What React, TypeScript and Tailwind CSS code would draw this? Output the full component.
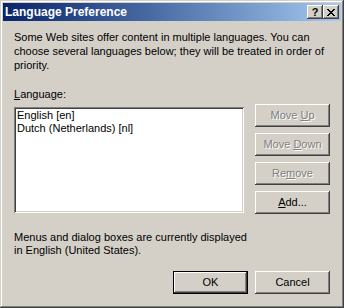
import React from 'react';

const font = { fontFamily: '"Liberation Sans", Arial, sans-serif' };

const raised =
  'shadow-[inset_-1px_-1px_#404040,inset_1px_1px_#ffffff,inset_-2px_-2px_#808080,inset_2px_2px_#d4d0c8]';

const Btn: React.FC<{ label: React.ReactNode; disabled?: boolean; isDefault?: boolean }> = ({
  label,
  disabled,
  isDefault,
}) => (
  <div
    className={
      'flex h-[23px] w-[75px] items-center justify-center bg-[#d4d0c8] text-[11px] ' +
      (isDefault
        ? 'shadow-[inset_-1px_-1px_#000000,inset_1px_1px_#000000,inset_-2px_-2px_#404040,inset_2px_2px_#ffffff,inset_-3px_-3px_#808080]'
        : raised) +
      (disabled ? ' text-[#808080] [text-shadow:1px_1px_0_#ffffff]' : ' text-black')
    }
  >
    <span>{label}</span>
  </div>
);

const CaptionBtn: React.FC<{ children: React.ReactNode }> = ({ children }) => (
  <div className={'flex h-[14px] w-[16px] items-center justify-center bg-[#d4d0c8] ' + raised}>{children}</div>
);

export default function App() {
  return (
    <div
      className="flex h-[308px] w-[344px] flex-col bg-[#d4d0c8] p-[3px] text-[11px] text-black shadow-[inset_-1px_-1px_#404040,inset_1px_1px_#d4d0c8,inset_-2px_-2px_#808080,inset_2px_2px_#ffffff]"
      style={font}
    >
      {/* title bar */}
      <div className="flex h-[18px] items-center bg-gradient-to-r from-[#0a246a] to-[#a6caf0] pl-[2px] pr-[2px]">
        <span className="flex-1 text-[12px] font-bold text-white">Language Preference</span>
        <CaptionBtn>
          <span className="text-[11px] font-bold leading-none text-black">?</span>
        </CaptionBtn>
        <CaptionBtn>
          <svg width="8" height="7" viewBox="0 0 8 7" shapeRendering="crispEdges">
            <path d="M0 0h2v1H0zM6 0h2v1H6zM1 1h2v1H1zM5 1h2v1H5zM2 2h4v1H2zM3 3h2v1H3zM2 4h4v1H2zM1 5h2v1H1zM5 5h2v1H5zM0 6h2v1H0zM6 6h2v1H6z" fill="#000" />
          </svg>
        </CaptionBtn>
      </div>

      <div className="flex flex-1 flex-col px-[11px]">
        <p className="mt-[9px] leading-[14px]">
          Some Web sites offer content in multiple languages. You can choose several languages below; they will be
          treated in order of priority.
        </p>

        <p className="mt-[15px] leading-[14px]">
          <u>L</u>anguage:
        </p>

        <div className="mt-[3px] flex">
          <div className="mt-[3px] h-[106px] w-[230px] bg-white px-[3px] py-[2px] leading-[13px] shadow-[inset_1px_1px_#808080,inset_-1px_-1px_#ffffff,inset_2px_2px_#404040,inset_-2px_-2px_#d4d0c8]">
            <div>English [en]</div>
            <div>Dutch (Netherlands) [nl]</div>
          </div>
          <div className="ml-[11px] flex flex-col gap-[6px]">
            <Btn
              disabled
              label={
                <>
                  Move <u>U</u>p
                </>
              }
            />
            <Btn
              disabled
              label={
                <>
                  Move <u>D</u>own
                </>
              }
            />
            <Btn
              disabled
              label={
                <>
                  Re<u>m</u>ove
                </>
              }
            />
            <Btn
              label={
                <>
                  <u>A</u>dd...
                </>
              }
            />
          </div>
        </div>

        <p className="mt-[17px] leading-[13px]">
          Menus and dialog boxes are currently displayed
          <br />
          in English (United States).
        </p>

        <div className="mt-[14px] flex justify-end gap-[7px]">
          <Btn isDefault label="OK" />
          <Btn label="Cancel" />
        </div>
      </div>
    </div>
  );
}
